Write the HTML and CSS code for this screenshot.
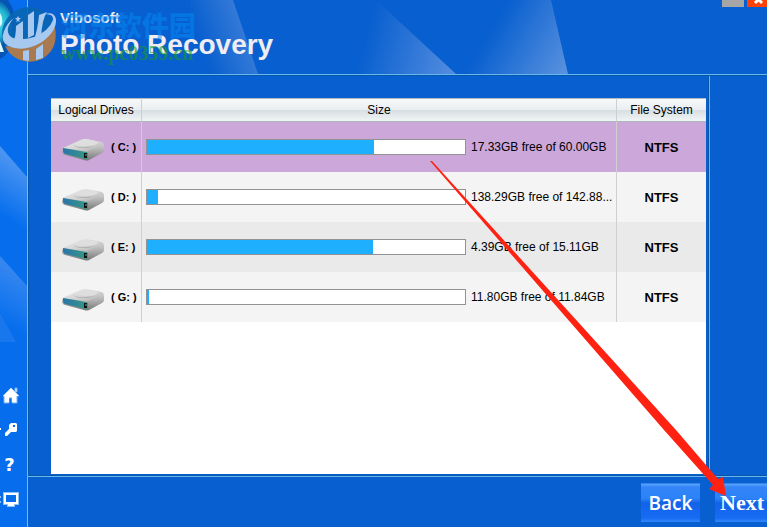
FILE: index.html
```html
<!DOCTYPE html>
<html lang="en">
<head>
<meta charset="utf-8">
<title>Vibosoft Photo Recovery</title>
<link rel="stylesheet" href="styles.css">
</head>
<body>
<svg class="defs" aria-hidden="true">
  <defs>
    <linearGradient id="metal" x1="0" y1="0" x2="1" y2="1"><stop offset="0" stop-color="#f4f4f4"/><stop offset=".6" stop-color="#cfcfcf"/><stop offset="1" stop-color="#aaa"/></linearGradient>
    <linearGradient id="side" x1="0" y1="0" x2="0" y2="1"><stop offset="0" stop-color="#e4e4e4"/><stop offset=".5" stop-color="#b4b4b4"/><stop offset="1" stop-color="#777"/></linearGradient>
    <linearGradient id="front" x1="0" y1="0" x2="1" y2="0"><stop offset="0" stop-color="#2b75a8"/><stop offset="1" stop-color="#359a84"/></linearGradient>
    <symbol id="drive" viewBox="0 0 42 22">
      <path d="M1 9 19 1Q21 0 24 0L39 3Q42 4 42 6V11Q42 13 40 14L27 21Q25 22 22 21L3 16Q0 15 0 12Z" fill="url(#side)"/>
      <path d="M1 9 19 1Q21 0 24 0L39 3Q42 4 41 5L26 12Q24 13 21 12Z" fill="url(#metal)"/>
      <path d="M11 5Q13 9 25 8Q35 7 36 4Q31 9 22 9Q12 9 11 5Z" fill="#aaa"/>
      <ellipse cx="25" cy="4" rx="11" ry="3" fill="#dedede"/>
      <path d="M1 9 24 13Q26 13 26 15V19Q26 21 24 20L3 15Q1 14 1 12Z" fill="url(#front)"/>
      <path d="M22 14h3v5h-3z" fill="#111"/><path d="M24 15v2" stroke="#4ec09a"/>
    </symbol>
  </defs>
</svg>
<div class="app">
  <nav class="sidebar" aria-label="Tools">
    <svg class="rays" viewBox="0 0 27 527" preserveAspectRatio="none" aria-hidden="true">
      <defs>
        <linearGradient id="s1" gradientUnits="userSpaceOnUse" x1="13" y1="160" x2="-15" y2="204"><stop stop-color="#4a94f1"/><stop offset="1" stop-color="#066eed"/></linearGradient>
        <linearGradient id="s2" gradientUnits="userSpaceOnUse" x1="13" y1="270" x2="-12" y2="314"><stop stop-color="#3586f0"/><stop offset="1" stop-color="#066eed"/></linearGradient>
      </defs>
      <path d="M0 146 27 177V230H0Z" fill="url(#s1)"/>
      <path d="M0 256 27 286V340H0Z" fill="url(#s2)"/>
      <path d="M0 313 16 342H0Z" fill="#1977ed"/>
    </svg>
    <button class="tool" aria-label="Home"><svg viewBox="0 0 19 19"><path d="M11 2 19 10H17V17H12V12H9V17H4V10H3L11 2ZM15 2h2v4h-2z" fill="#fff" stroke="#72aff5"/><path d="M11 2 3 10H5V16H9V11H12V16H16V10H19Z" fill="#fff"/></svg></button>
    <button class="tool" aria-label="Unlock"><svg viewBox="0 0 19 19"><path d="M11 2H16L17 3V10L16 11H11L7 15H5V12L9 8V4Z" fill="#fff"/><path d="M13 4h2v2h-2z" fill="#066eed"/><path d="M0 7h1v2H0z" fill="#fff"/></svg></button>
    <button class="tool tool-help" aria-label="Help">?</button>
    <button class="tool" aria-label="Display"><svg viewBox="0 0 19 19"><path d="M3 1H19V14H15V16H7V14H3Z" fill="#8ec0fa"/><path d="M4 2H18V13H14V15H8V13H4Z" fill="#fff"/><path d="M6 4h10v7H6z" fill="#066eed"/><path d="M0 5h1v2H0zM0 10h1v2H0z" fill="#8ec0fa"/></svg></button>
  </nav>
  <header class="header">
    <svg class="rays" viewBox="28 0 739 74" preserveAspectRatio="none" aria-hidden="true">
      <defs>
        <linearGradient id="h1" gradientUnits="userSpaceOnUse" x1="256" y1="66" x2="213" y2="81"><stop stop-color="#3379d7"/><stop offset="1" stop-color="#085fcf"/></linearGradient>
        <linearGradient id="h2" gradientUnits="userSpaceOnUse" x1="452" y1="74" x2="362" y2="50"><stop stop-color="#528cdf"/><stop offset="1" stop-color="#085fcf"/></linearGradient>
        <linearGradient id="h3" gradientUnits="userSpaceOnUse" x1="568" y1="74" x2="492" y2="28"><stop stop-color="#5b93df"/><stop offset="1" stop-color="#085fcf"/></linearGradient>
      </defs>
      <path d="M190 0H233L258 74H190Z" fill="url(#h1)"/>
      <path d="M335 0H376L456 74H335Z" fill="url(#h2)"/>
      <path d="M460 0H551L568 74H460Z" fill="url(#h3)"/>
    </svg>
    <h1 class="brand"><span class="maker">Vibosoft</span><span class="product">Photo Recovery</span></h1>
    <div class="window-buttons"><button class="minimize" aria-label="Minimize"></button><button class="close" aria-label="Close"><svg viewBox="0 0 20 7"><path d="M7-5 15 3M16-5 8 3" stroke="#fff" stroke-width="3"/></svg></button></div>
  </header>
  <main class="content">
    <div class="panel">
      <table>
        <colgroup><col class="col-drive"><col><col class="col-fs"></colgroup>
        <thead><tr><th>Logical Drives</th><th>Size</th><th>File System</th></tr></thead>
        <tbody>
          <tr class="selected"><td><div class="drive"><svg><use href="#drive"/></svg><span>( C: )</span></div></td><td><div class="size"><progress max="318" value="227" aria-label="Used on C"></progress><span>17.33GB free of 60.00GB</span></div></td><td>NTFS</td></tr>
          <tr><td><div class="drive"><svg><use href="#drive"/></svg><span>( D: )</span></div></td><td><div class="size"><progress max="318" value="11" aria-label="Used on D"></progress><span>138.29GB free of 142.88...</span></div></td><td>NTFS</td></tr>
          <tr><td><div class="drive"><svg><use href="#drive"/></svg><span>( E: )</span></div></td><td><div class="size"><progress max="318" value="226" aria-label="Used on E"></progress><span>4.39GB free of 15.11GB</span></div></td><td>NTFS</td></tr>
          <tr><td><div class="drive"><svg><use href="#drive"/></svg><span>( G: )</span></div></td><td><div class="size"><progress max="318" value="2" aria-label="Used on G"></progress><span>11.80GB free of 11.84GB</span></div></td><td>NTFS</td></tr>
        </tbody>
      </table>
    </div>
  </main>
  <aside class="gutter"></aside>
  <footer class="footer"><button class="action back">Back</button><button class="action next">Next</button></footer>

  <svg class="emblem" viewBox="0 0 60 66" aria-hidden="true">
    <defs><radialGradient id="lens" gradientUnits="userSpaceOnUse" cx="-8" cy="23" r="24"><stop offset=".2" stop-color="#4be0f0"/><stop offset=".65" stop-color="#23b8d2"/><stop offset="1" stop-color="#0755a9"/></radialGradient></defs>
    <path d="M0 0H8Q17 12 15 32Q12 53 0 59Z" fill="#06499e" opacity=".7"/>
    <path d="M0 0Q13 10 12 27Q10 47 0 52Z" fill="url(#lens)"/>
    <path d="M0 13Q3 18 2 24L0 27M0 41 4 52H0Z" fill="#d9fbff"/>
    <circle cx="29" cy="34" r="27" fill="#0966b2" opacity=".9"/>
    <path d="M5 46Q27 52 55 27Q59 49 42 59Q29 65 16 58Q9 54 5 46Z" fill="#a9794f"/>
    <path d="M14 18Q4 29 10 36Q17 42 34 37Q49 31 53 20Q54 14 45 14Q54 11 56 19Q57 31 42 42Q24 53 8 46Q0 41 4 31Q7 23 14 18Z" fill="#a7c8ef"/>
    <path d="M16 26 23 21V42L13 41Q16 38 16 26ZM28 15 34 11V35L28 38ZM39 15 47 12Q42 19 41 38L33 43Q38 29 39 15ZM23 51 29 50V61L23 60ZM36 49 43 44V58L36 60Z" fill="#a7c8ef"/>
    <path d="M18 16 19 18H21L19 20 20 22 18 21 16 22 17 20 15 18H17Z" fill="#a7c8ef"/>
  </svg>
  <div class="watermark"><span class="mark-name" lang="zh">河东软件园</span><span class="mark-url">www.pc0359.cn</span></div>
  <svg class="pointer" viewBox="0 0 767 527" preserveAspectRatio="none" aria-hidden="true"><path d="M430 161 432 161 676 430 718 479 723 477 726 496 709 489 713 485 664 430Z" fill="#ff2213"/></svg>
</div>
</body>
</html>
```
FILE: styles.css
```css
* { box-sizing: border-box; }
body { margin: 0; background: #085fcf; font-family: "Liberation Sans", Arial, sans-serif; font-size: 12px; color: #000; }
button { border: 0; padding: 0; font: inherit; }
svg { display: block; }
.defs { position: absolute; width: 0; height: 0; }
.app {
  position: relative;
  display: grid;
  grid-template-columns: 28px 1fr 58px;
  grid-template-rows: 75px 1fr 51px;
  min-height: 100vh;
  overflow: hidden;
}
.sidebar {
  position: relative;
  grid-row: 1 / 4;
  display: flex;
  flex-direction: column;
  justify-content: flex-end;
  gap: 15px;
  padding-bottom: 17px;
  background: #066eed;
  border-right: 1px solid #73bdf5;
}
.rays { position: absolute; inset: 0; width: 100%; height: 100%; }
.tool { position: relative; width: 19px; height: 20px; background: none; color: #fff; }
.tool svg { width: 19px; height: 19px; }
.tool-help { font: bold 18px/20px "DejaVu Sans", sans-serif; }
.header {
  position: relative;
  grid-column: 2 / 4;
  display: flex;
  justify-content: space-between;
  align-items: flex-start;
  border-bottom: 1px solid #65b9ed;
  box-shadow: 0 1px #0756aa;
}
.brand { position: relative; margin: 0; padding: 9px 0 0 32px; color: #f0edf2; display: flex; flex-direction: column; }
.maker { font-size: 15px; line-height: 18px; }
.product { font-size: 28px; line-height: 36px; }
.window-buttons { position: relative; display: flex; gap: 3px; }
.minimize { width: 22px; height: 7px; background: #a6a6a6; }
.close { width: 20px; height: 7px; background: #ff4208; }
.close svg { width: 20px; height: 7px; overflow: hidden; }
.content { display: flex; padding: 23px 3px 2px 22px; border-left: 1px solid #0756aa; }
.panel { flex: 1; background: #fff; }
.gutter { border-left: 1px solid #65b9ed; box-shadow: -1px 0 #0756aa; }
.footer {
  grid-column: 2 / 4;
  display: flex;
  justify-content: flex-end;
  gap: 15px;
  padding-top: 6px;
  margin-right: -7px;
  border-top: 1px solid #65b9ed;
  box-shadow: 0 -1px #0756aa;
}
table { width: 100%; table-layout: fixed; border-collapse: separate; border-spacing: 0; }
.col-drive { width: 91px; }
.col-fs { width: 89px; }
th {
  height: 24px;
  padding: 0;
  border-top: 1px solid #aebcc1;
  border-bottom: 1px solid #a9b7ba;
  background: linear-gradient(#f7f9fa, #e9eef0 48%, #d8dfe2 52%, #f0f4f5);
  font-weight: normal;
}
th, td { border-right: 1px solid #cfcfcf; }
th:last-child, td:last-child { border-right: 0; }
td { height: 50px; padding: 0; background: #f4f4f4; }
tr:nth-child(odd) td { background: #eaeaea; }
tr.selected td { background: #cba7da; }
td:last-child { text-align: center; font-size: 13px; font-weight: bold; }
.drive { display: flex; align-items: center; gap: 7px; padding-left: 11px; font-size: 11px; font-weight: bold; white-space: nowrap; }
.drive svg { width: 42px; height: 22px; margin-top: 6px; }
.size { display: flex; align-items: center; gap: 5px; padding-left: 4px; }
.size span { flex: 0 0 145px; white-space: nowrap; }
progress { appearance: none; flex: 1; min-width: 0; height: 16px; border: 1px solid #929292; background: #fff; }
progress::-webkit-progress-bar { background: #fff; }
progress::-webkit-progress-value { background: #1eafff; }
.action {
  width: 59px;
  height: 39px;
  color: #fff;
  background: linear-gradient(#5ba5ff 0, #3385f7 3px, #2c82f8 38%, #1262e8 50%, #176cf4 90%, #3388fb);
  border-top: 1px solid #3385e8;
}
.back { font: 600 19px "Open Sans", sans-serif; }
.next { padding-left: 5px; text-align: left; font: bold 22px "Liberation Serif", serif; }
.emblem { position: absolute; left: 0; top: 0; width: 60px; height: 66px; }
.watermark { position: absolute; left: 61px; top: 8px; display: flex; flex-direction: column; font-weight: bold; }
.mark-name { color: rgba(0, 140, 245, .5); font: 900 27px/34px "Noto Sans CJK SC", sans-serif; }
.mark-url { color: rgba(24, 155, 30, .6); font: bold 20px/22px "Liberation Serif", serif; }
.pointer { position: absolute; inset: 0; width: 100%; height: 100%; pointer-events: none; }
```
